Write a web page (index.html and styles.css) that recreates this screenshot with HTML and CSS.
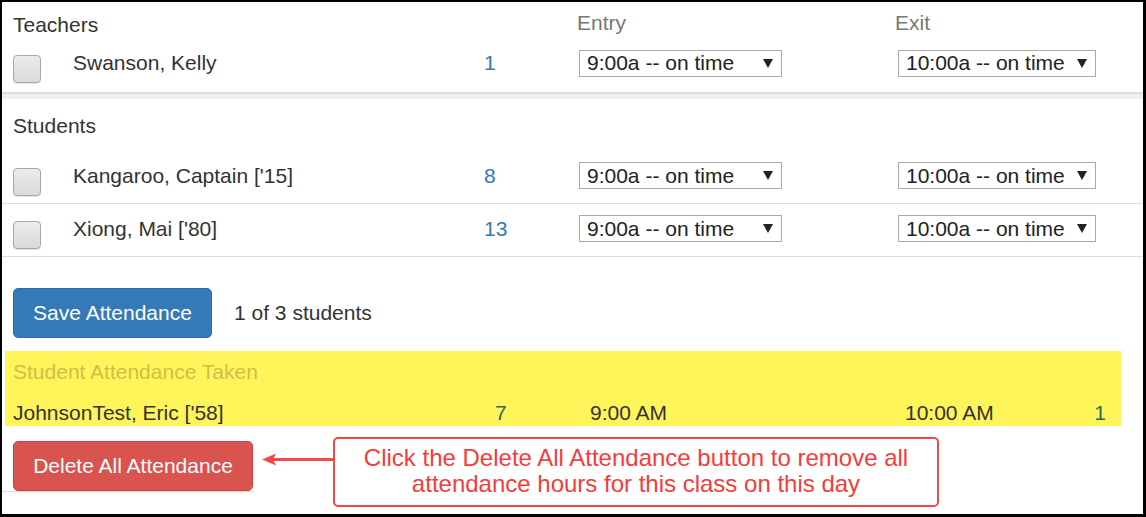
FILE: index.html
```html
<!DOCTYPE html>
<html>
<head>
<meta charset="utf-8">
<link rel="stylesheet" href="styles.css">
</head>
<body>
<div class="frame">
  <div class="grid head-row">
    <div class="group-title">Teachers</div>
    <div class="col-head entry-head">Entry</div>
    <div class="col-head exit-head">Exit</div>
  </div>
  <div class="grid row teacher-row">
    <span class="check"></span>
    <span class="name">Swanson, Kelly</span>
    <span class="num">1</span>
    <div class="select entry-sel"><span>9:00a -- on time</span><svg class="caret" viewBox="0 0 10 9"><path d="M0 0H10L5 9Z"/></svg></div>
    <div class="select exit-sel"><span>10:00a -- on time</span><svg class="caret" viewBox="0 0 10 9"><path d="M0 0H10L5 9Z"/></svg></div>
  </div>
  <div class="separator"></div>
  <div class="students-head">Students</div>
  <div class="grid row bordered">
    <span class="check"></span>
    <span class="name">Kangaroo, Captain ['15]</span>
    <span class="num">8</span>
    <div class="select entry-sel"><span>9:00a -- on time</span><svg class="caret" viewBox="0 0 10 9"><path d="M0 0H10L5 9Z"/></svg></div>
    <div class="select exit-sel"><span>10:00a -- on time</span><svg class="caret" viewBox="0 0 10 9"><path d="M0 0H10L5 9Z"/></svg></div>
  </div>
  <div class="grid row bordered">
    <span class="check"></span>
    <span class="name">Xiong, Mai ['80]</span>
    <span class="num">13</span>
    <div class="select entry-sel"><span>9:00a -- on time</span><svg class="caret" viewBox="0 0 10 9"><path d="M0 0H10L5 9Z"/></svg></div>
    <div class="select exit-sel"><span>10:00a -- on time</span><svg class="caret" viewBox="0 0 10 9"><path d="M0 0H10L5 9Z"/></svg></div>
  </div>
  <div class="actions">
    <button class="btn btn-primary">Save Attendance</button>
    <span class="count">1 of 3 students</span>
  </div>
  <div class="taken">
    <div class="taken-title">Student Attendance Taken</div>
    <div class="taken-row">
      <span>JohnsonTest, Eric ['58]</span>
      <span class="green">7</span>
      <span>9:00 AM</span>
      <span>10:00 AM</span>
      <span class="green last">1</span>
    </div>
  </div>
  <div class="delete-wrap">
    <button class="btn btn-danger">Delete All Attendance</button>
  </div>
  <svg class="arrow" viewBox="0 0 76 14"><path d="M76 7.5H10" stroke="#f44848" stroke-width="3"/><path d="M0 7.5L14 1.5L11 7.5L14 13.5Z" fill="#f44848"/></svg>
  <div class="callout">Click the Delete All Attendance button to remove all attendance hours for this class on this day</div>
</div>
</body>
</html>
```
FILE: styles.css
```css
html, body {
  margin: 0;
  padding: 0;
  background: #000;
  overflow: hidden;
}
.frame {
  position: relative;
  box-sizing: border-box;
  height: 517px;
  width: 1146px;
  background: #fff;
  border: solid #000;
  border-width: 2px 3px 3px 2px;
  font-family: "Liberation Sans", Arial, sans-serif;
  font-size: 21px;
  color: #333;
}
.grid {
  display: grid;
  grid-template-columns: 60px 411px 95px 319px 198px 1fr;
  padding-left: 11px;
  align-items: center;
}
.head-row {
  padding-top: 11px;
  line-height: 24px;
  align-items: start;
}
.group-title {
  grid-column: 1 / 4;
}
.col-head {
  color: #777;
  margin-top: -2px;
}
.entry-head { grid-column: 4; margin-left: -2px; }
.exit-head { grid-column: 5; margin-left: -3px; }
.row {
  height: 52px;
}
.teacher-row {
  height: 55px;
}
.bordered {
  border-bottom: 1px solid #ddd;
}
.check {
  box-sizing: border-box;
  width: 28px;
  height: 28px;
  border: 1px solid #a8a8a8;
  border-radius: 4px;
  background: linear-gradient(#ececec, #dadada);
  box-shadow: 0 1px 1px rgba(0,0,0,0.12);
  margin-top: 9px;
}
.name {
  line-height: 24px;
  margin-top: -3px;
}
.num {
  color: #337ab7;
  line-height: 24px;
  margin-top: -3px;
}
.select {
  box-sizing: border-box;
  height: 27px;
  border: 1px solid #a9a9a9;
  display: flex;
  align-items: center;
  justify-content: space-between;
  padding: 0 8px 0 7px;
  line-height: 24px;
  color: #222;
  margin-top: -3px;
}
.entry-sel { width: 203px; }
.exit-sel { width: 198px; }
.caret {
  width: 10px;
  height: 9px;
  fill: #222;
}
.separator {
  height: 5px;
  border-top: 2px solid #ddd;
  background: #f0f0f0;
}
.students-head {
  padding: 15px 0 13px 11px;
  line-height: 24px;
}
.actions {
  display: flex;
  align-items: center;
  gap: 22px;
  padding-left: 11px;
  margin-top: 31px;
}
.btn {
  box-sizing: border-box;
  height: 50px;
  border: 1px solid transparent;
  border-radius: 5px;
  padding: 0 18px;
  font-family: "Liberation Sans", Arial, sans-serif;
  font-size: 21px;
  color: #fff;
}
.btn-primary {
  width: 199px;
  background: #337ab7;
  border-color: #2e6da4;
}
.btn-danger {
  width: 240px;
  background: #d9534f;
  border-color: #d43f3a;
}
.count {
  line-height: 24px;
}
.taken {
  margin: 13px 22px 0 3px;
  height: 75px;
  box-sizing: border-box;
  background: #fff45a;
  padding: 9px 15px 0 8px;
  line-height: 24px;
}
.taken-title {
  color: #c9c24a;
}
.taken-row {
  margin-top: 17px;
  display: grid;
  grid-template-columns: 482px 95px 315px 1fr auto;
}
.green {
  color: #2d6a4f;
}
.delete-wrap {
  margin-top: 15px;
  padding-left: 11px;
  width: 242px;
  border-bottom: 1px solid #ddd;
}
.delete-wrap .btn {
  display: block;
}
.arrow {
  position: absolute;
  left: 260px;
  top: 450px;
  width: 76px;
  height: 14px;
}
.callout {
  position: absolute;
  left: 331px;
  top: 435px;
  box-sizing: border-box;
  width: 606px;
  height: 70px;
  border: 2px solid #f44848;
  border-radius: 5px;
  background: #fff;
  color: #f43c3c;
  font-size: 24px;
  line-height: 26px;
  text-align: center;
  padding: 6px 20px 0;
}
```
